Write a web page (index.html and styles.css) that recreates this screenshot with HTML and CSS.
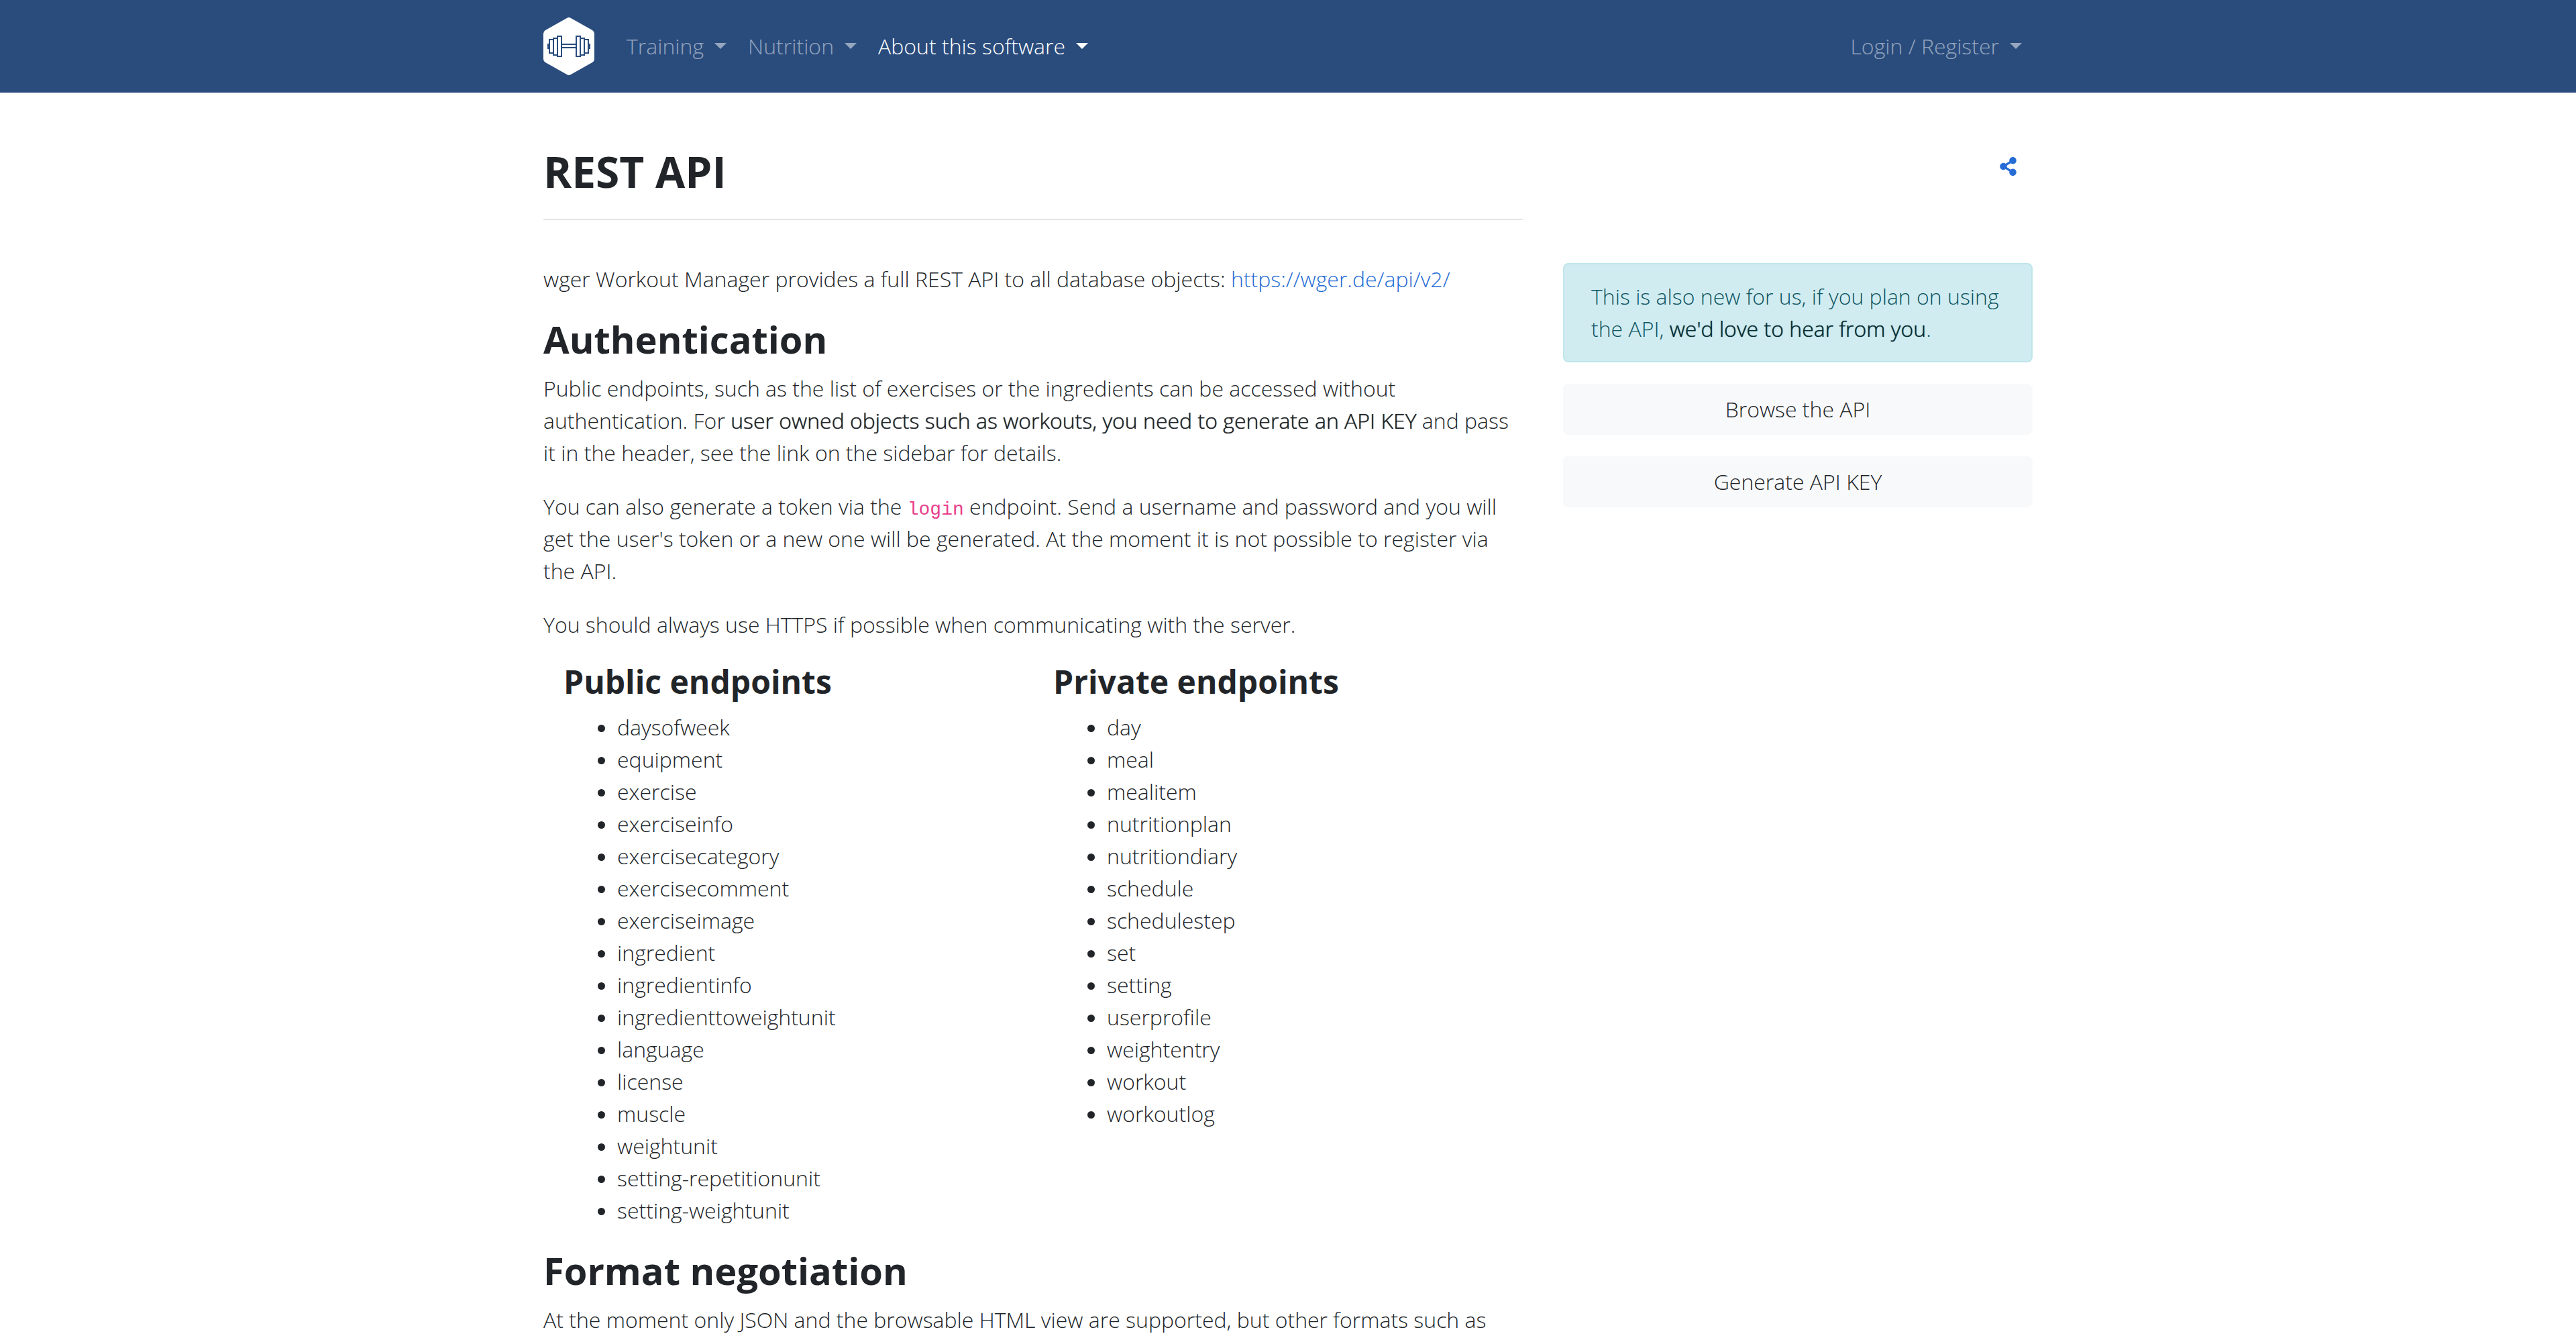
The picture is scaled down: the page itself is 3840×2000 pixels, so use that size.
FILE: index.html
```html
<!DOCTYPE html>
<html lang="en">
<head>
  <meta charset="utf-8">
  <title>REST API</title>
  <link rel="stylesheet" href="styles.css">
</head>
<body>
  <header class="navbar">
    <nav class="container navbar-inner" aria-label="Main">
      <a class="brand" href="#" aria-label="Home">
        <svg class="logo" viewBox="0 0 76 86" aria-hidden="true">
          <path fill="#fff" d="M35 1Q38-1 41 1L73 19Q76 21 76 24V62Q76 65 73 67L41 85Q38 87 35 85L3 67Q0 65 0 62V24Q0 21 3 19Z"/>
          <g fill="#fff" stroke="#2a4c7d" stroke-width="2">
            <path d="M7 40h3v6H7zM66 40h3v6h-3z" fill="#2a4c7d"/>
            <path d="M9 33h6v20H9zM15 31h6v25h-6zM21 28h6v30h-6zM49 28h6v30h-6zM55 31h6v25h-6zM61 33h6v20h-6z"/>
            <path d="M27 40h22v5H27z"/>
          </g>
        </svg>
      </a>
      <a class="nav-link" href="#">Training</a>
      <a class="nav-link" href="#">Nutrition</a>
      <a class="nav-link active" href="#">About this software</a>
      <a class="nav-link nav-end" href="#">Login / Register</a>
    </nav>
  </header>

  <div class="container layout">
    <div class="title-block">
      <h1>REST API</h1>
      <hr>
    </div>
    <div class="actions">
      <a class="share" href="#" aria-label="Share">
        <svg class="share-icon" viewBox="0 0 448 512" aria-hidden="true"><path fill="currentColor" d="M352 320c-22.608 0-43.387 7.819-59.79 20.895l-102.486-64.054a96.551 96.551 0 0 0 0-41.683l102.486-64.054C308.613 184.181 329.392 192 352 192c53.019 0 96-42.981 96-96S405.019 0 352 0s-96 42.981-96 96c0 7.158.79 14.13 2.276 20.841L155.79 180.895C139.387 167.819 118.608 160 96 160c-53.019 0-96 42.981-96 96s42.981 96 96 96c22.608 0 43.387-7.819 59.79-20.895l102.486 64.054A96.301 96.301 0 0 0 256 416c0 53.019 42.981 96 96 96s96-42.981 96-96-42.981-96-96-96z"/></svg>
      </a>
    </div>

    <main class="content">
      <p>wger Workout Manager provides a full REST API to all database objects: <a href="#">https://wger.de/api/v2/</a></p>

      <h2>Authentication</h2>
      <p>Public endpoints, such as the list of exercises or the ingredients can be accessed without authentication. For <strong>user owned objects such as workouts, you need to generate an API KEY</strong> and pass it in the header, see the link on the sidebar for details.</p>
      <p>You can also generate a token via the <code>login</code> endpoint. Send a username and password and you will get the user's token or a new one will be generated. At the moment it is not possible to register via the API.</p>
      <p>You should always use HTTPS if possible when communicating with the server.</p>

      <div class="endpoints">
        <section>
          <h3>Public endpoints</h3>
          <ul>
            <li>daysofweek</li>
            <li>equipment</li>
            <li>exercise</li>
            <li>exerciseinfo</li>
            <li>exercisecategory</li>
            <li>exercisecomment</li>
            <li>exerciseimage</li>
            <li>ingredient</li>
            <li>ingredientinfo</li>
            <li>ingredienttoweightunit</li>
            <li>language</li>
            <li>license</li>
            <li>muscle</li>
            <li>weightunit</li>
            <li>setting-repetitionunit</li>
            <li>setting-weightunit</li>
          </ul>
        </section>
        <section>
          <h3>Private endpoints</h3>
          <ul>
            <li>day</li>
            <li>meal</li>
            <li>mealitem</li>
            <li>nutritionplan</li>
            <li>nutritiondiary</li>
            <li>schedule</li>
            <li>schedulestep</li>
            <li>set</li>
            <li>setting</li>
            <li>userprofile</li>
            <li>weightentry</li>
            <li>workout</li>
            <li>workoutlog</li>
          </ul>
        </section>
      </div>

      <h2>Format negotiation</h2>
      <p>At the moment only JSON and the browsable HTML view are supported, but other formats such as</p>
    </main>

    <aside class="sidebar">
      <div class="alert">This is also new for us, if you plan on using the API, <a href="#">we'd love to hear from you</a>.</div>
      <a class="btn" href="#">Browse the API</a>
      <a class="btn" href="#">Generate API KEY</a>
    </aside>
  </div>
</body>
</html>
```
FILE: styles.css
```css
* {
  box-sizing: border-box;
}

body {
  margin: 0;
  background: #fff;
  color: #212529;
  font-family: "Open Sans", sans-serif;
  font-size: 32px;
  font-weight: 300;
  line-height: 48px;
}

a {
  color: #256cd5;
  text-decoration: none;
}

.container {
  width: 100%;
  max-width: 2280px;
  margin: 0 auto;
  padding: 0 30px;
}

.navbar {
  background: #2a4c7d;
}

.navbar-inner {
  display: flex;
  align-items: center;
  padding-top: 16px;
  padding-bottom: 16px;
}

.brand {
  display: flex;
  padding: 10px 0;
  margin-right: 32px;
}

.logo {
  width: 76px;
  height: 86px;
}

.nav-link {
  display: flex;
  align-items: center;
  gap: 16px;
  padding: 16px;
  color: rgba(255, 255, 255, 0.5);
}

.nav-link::after {
  content: "";
  margin-bottom: 2px;
  border: solid transparent;
  border-width: 9px 9px 0;
  border-top-color: currentColor;
}

.nav-link.active {
  color: #fff;
}

.nav-end {
  margin-left: auto;
}

.layout {
  display: grid;
  grid-template-columns: minmax(0, 1460fr) minmax(0, 700fr);
  column-gap: 60px;
  padding-top: 80px;
}

h1,
h2,
h3 {
  margin: 0 0 16px;
  font-weight: 700;
}

h1 {
  font-size: 64px;
  line-height: 76px;
  margin-bottom: 32px;
}

h2 {
  font-size: 56px;
  line-height: 67px;
}

h3 {
  font-size: 48px;
  line-height: 57px;
}

hr {
  margin: 0 0 64px;
  border: 0;
  border-top: 2px solid #e5e5e5;
}

p,
ul {
  margin: 0 0 32px;
}

ul {
  padding-left: 80px;
}

/* Emphasis thickens the light face softly and keeps its widths */
strong,
.alert a {
  font-weight: 300;
  text-shadow: 0 0 1px currentColor;
}

code {
  color: #e83e8c;
  font-family: "Liberation Mono", monospace;
  font-size: 28px;
  line-height: 1;
}

.actions {
  display: flex;
  justify-content: flex-end;
  align-items: flex-start;
}

.share {
  display: flex;
  padding: 16px 24px;
}

.share-icon {
  width: 25px;
  height: 28px;
}

.endpoints {
  display: grid;
  grid-template-columns: 1fr 1fr;
  margin-right: -30px;
  padding-left: 30px;
}

.sidebar {
  display: flex;
  flex-direction: column;
  gap: 32px;
}

.alert {
  padding: 24px 40px;
  border: 2px solid #bee5eb;
  border-radius: 8px;
  background: #d1ecf1;
  color: #0c5460;
}

.alert a {
  color: #062c33;
}

.btn {
  padding: 14px 24px;
  border-radius: 8px;
  background: #f8f9fa;
  color: #212529;
  text-align: center;
}
```
